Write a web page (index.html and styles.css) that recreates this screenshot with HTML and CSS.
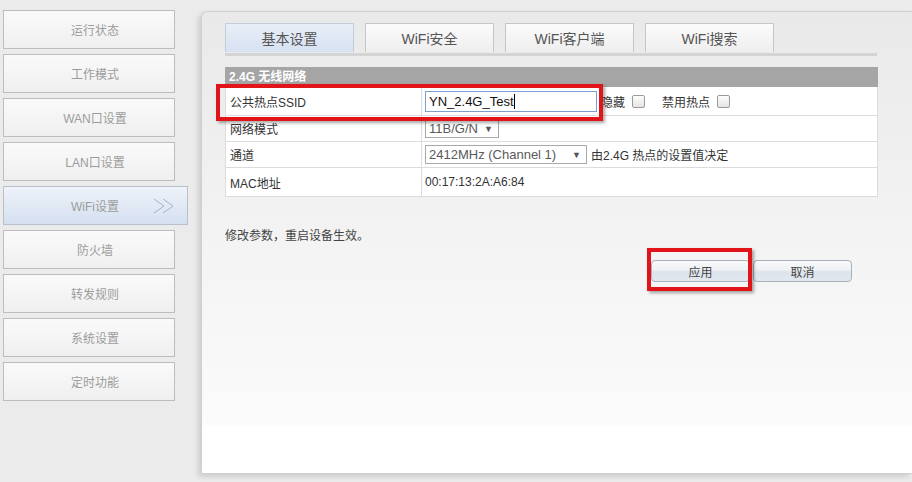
FILE: index.html
```html
<!DOCTYPE html>
<html lang="zh-CN">
<head>
<meta charset="utf-8"/>
<meta content="width=device-width, initial-scale=1.0" name="viewport"/>
<title>WiFi设置</title>
<link rel="stylesheet" href="styles.css">
</head>
<body>
<div class="page">
  <ul class="menu">
    <li><a href="#">运行状态</a></li>
    <li><a href="#">工作模式</a></li>
    <li><a href="#">WAN口设置</a></li>
    <li><a href="#">LAN口设置</a></li>
    <li class="active"><a href="#">WiFi设置</a>
      <svg class="arrows" width="24" height="16" viewBox="0 0 24 16"><path d="M1 1 L11 8 L1 15 M10 1 L20 8 L10 15" fill="none" stroke="#a3b3cc" stroke-width="1"/></svg>
    </li>
    <li><a href="#">防火墙</a></li>
    <li><a href="#">转发规则</a></li>
    <li><a href="#">系统设置</a></li>
    <li><a href="#">定时功能</a></li>
  </ul>

  <div class="panel">
    <div class="tabs">
      <a class="tab active" href="#">基本设置</a>
      <a class="tab" href="#">WiFi安全</a>
      <a class="tab" href="#">WiFi客户端</a>
      <a class="tab" href="#">WiFi搜索</a>
    </div>

    <div class="section">
      <div class="section-title">2.4G 无线网络</div>
      <table class="form">
        <tr class="row-ssid">
          <td class="label">公共热点SSID</td>
          <td class="value"><span class="text-input">YN_2.4G_Test<i class="caret"></i></span><span class="inline">隐藏</span><span class="check"></span><span class="inline gap">禁用热点</span><span class="check"></span></td>
        </tr>
        <tr>
          <td class="label">网络模式</td>
          <td class="value"><span class="select mode">11B/G/N<b>▼</b></span></td>
        </tr>
        <tr>
          <td class="label">通道</td>
          <td class="value"><span class="select channel">2412MHz (Channel 1)<b>▼</b></span><span class="hint">由2.4G 热点的设置值决定</span></td>
        </tr>
        <tr class="row-mac">
          <td class="label">MAC地址</td>
          <td class="value">00:17:13:2A:A6:84</td>
        </tr>
      </table>
    </div>

    <p class="note">修改参数，重启设备生效。</p>

    <div class="actions">
      <button class="btn">应用</button>
      <button class="btn">取消</button>
    </div>

    <div class="mark mark-ssid"></div>
    <div class="mark mark-apply"></div>
  </div>
</div>
</body>
</html>
```

FILE: styles.css
```css
body {
  margin: 0;
  background: #ebebeb;
  font-family: "Liberation Sans", "Noto Sans CJK SC", sans-serif;
  font-size: 12px;
  color: #333;
  overflow: hidden;
}
.page {
  display: flex;
  width: 912px;
  height: 482px;
}
.menu {
  list-style: none;
  margin: 0;
  padding: 10px 0 0 3px;
  width: 198px;
  flex-shrink: 0;
  display: flex;
  flex-direction: column;
  gap: 5px;
}
.menu li {
  width: 172px;
  height: 39px;
  box-sizing: border-box;
  border: 1px solid #bdbdbd;
  background: linear-gradient(#fafafa, #efefef);
  display: flex;
  align-items: center;
  position: relative;
}
.menu li a {
  flex: 1;
  text-align: center;
  padding-left: 12px;
  color: #9c9c9c;
  text-decoration: none;
  font-size: 12px;
}
.menu li.active {
  width: 185px;
  border-color: #b8c0cc;
  background: linear-gradient(#eef2f9, #d5e0f0);
}
.menu li.active a {
  padding-right: 13px;
}
.menu .arrows {
  position: absolute;
  right: 10px;
  top: 11px;
}

.panel {
  position: relative;
  margin-top: 11px;
  width: 720px;
  height: 463px;
  box-sizing: border-box;
  border: 1px solid #cfcfcf;
  border-right: none;
  border-radius: 6px 0 0 0;
  background: linear-gradient(#e9e9e9 0, #f2f2f2 200px, #fbfbfb 412px, #ffffff 414px);
  box-shadow: -3px 3px 5px rgba(0, 0, 0, 0.12);
  padding: 11px 0 0 23px;
}
.tabs {
  display: flex;
  gap: 11px;
  width: 652px;
  padding-bottom: 1px;
  border-bottom: 3px solid #d4d4d4;
}
.tab {
  width: 129px;
  height: 29px;
  box-sizing: border-box;
  border: 1px solid #c6c6c6;
  border-bottom: none;
  background: linear-gradient(#fbfbfb, #eeeeee);
  color: #555;
  font-size: 14px;
  text-decoration: none;
  display: flex;
  align-items: center;
  justify-content: center;
}
.tab.active {
  background: linear-gradient(#e9eff8, #d6e1f1);
  border-color: #c4ccd8;
}

.section {
  margin-top: 11px;
  width: 653px;
}
.section-title {
  height: 20px;
  line-height: 21px;
  background: #a5a5a5;
  color: #fff;
  font-weight: bold;
  padding-left: 4px;
}
.form {
  width: 100%;
  border-collapse: collapse;
  background: #fff;
  border: 1px solid #dcdcdc;
  border-top: none;
}
.form td {
  height: 25px;
  padding: 0 4px;
  border-bottom: 1px solid #dcdcdc;
}
.form .row-ssid td { height: 28px; }
.form .row-mac td { height: 28px; }
.form td.label {
  width: 187px;
  border-right: 1px solid #dcdcdc;
}
.form td.value {
  padding-left: 3px;
  white-space: nowrap;
}
.text-input {
  display: inline-block;
  vertical-align: middle;
  width: 172px;
  height: 21px;
  box-sizing: border-box;
  border: 1px solid #7b9fcf;
  padding: 2px 3px 0;
  font-size: 13px;
  color: #111;
  background: #fff;
}
.caret {
  display: inline-block;
  width: 1px;
  height: 15px;
  background: #000;
  vertical-align: -3px;
}
.inline {
  vertical-align: middle;
  margin-left: 4px;
}
.inline.gap {
  margin-left: 17px;
}
.check {
  display: inline-block;
  vertical-align: middle;
  width: 11px;
  height: 11px;
  margin-left: 7px;
  border: 1px solid #9a9a9a;
  border-radius: 2px;
  background: linear-gradient(#fdfdfd, #e4e4e4);
}
.select {
  display: inline-flex;
  align-items: center;
  justify-content: space-between;
  height: 19px;
  box-sizing: border-box;
  border: 1px solid #a9a9a9;
  padding: 0 5px 0 3px;
  font-size: 13px;
  color: #5a5a5a;
  background: #fff;
  vertical-align: middle;
}
.select b {
  font-weight: normal;
  font-size: 9px;
  color: #555;
}
.select.mode { width: 74px; }
.select.channel { width: 162px; }
.hint {
  margin-left: 4px;
  vertical-align: middle;
}

.note {
  margin: 29px 0 0 0;
  color: #444;
}
.actions {
  display: flex;
  gap: 3px;
  margin: 17px 0 0 426px;
}
.btn {
  width: 99px;
  height: 22px;
  border: 1px solid #a9b1bd;
  border-radius: 4px;
  background: linear-gradient(#f8f9fb 0, #eef1f5 45%, #dce3ec 55%, #e3e8ef 100%);
  font-family: inherit;
  font-size: 12px;
  color: #444;
  padding: 0;
}

.mark {
  position: absolute;
  border: 4px solid #e11419;
  box-shadow: 2px 2px 3px rgba(0, 0, 0, 0.35);
  box-sizing: border-box;
}
.mark-ssid {
  left: 14px;
  top: 72px;
  width: 387px;
  height: 37px;
}
.mark-apply {
  left: 445px;
  top: 236px;
  width: 105px;
  height: 43px;
}
```
